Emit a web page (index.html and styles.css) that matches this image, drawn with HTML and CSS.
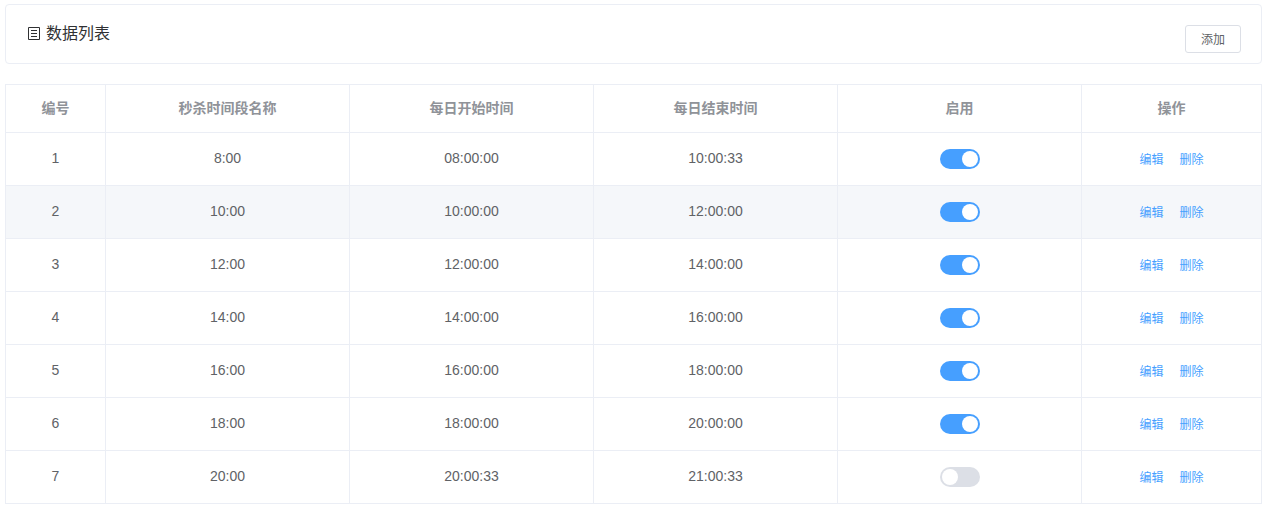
FILE: index.html
```html
<!DOCTYPE html>
<html lang="zh-CN">
<head>
<meta charset="utf-8">
<title>数据列表</title>
<link rel="stylesheet" href="styles.css">
</head>
<body>
<div class="card">
  <div class="title">
    <svg class="title-icon" width="12" height="14" viewBox="0 0 12 14" aria-hidden="true"><path d="M.5.5h11v12H.5zM3 3.5h6M3 6.5h6M3 9.5h6" fill="none" stroke="#303133" stroke-width="1"/></svg>
    <span>数据列表</span>
  </div>
  <button class="btn" type="button">添加</button>
</div>
<table class="table">
  <colgroup><col class="c-id"><col class="c-mid"><col class="c-mid"><col class="c-mid"><col class="c-mid"><col class="c-op"></colgroup>
  <thead>
    <tr><th>编号</th><th>秒杀时间段名称</th><th>每日开始时间</th><th>每日结束时间</th><th>启用</th><th>操作</th></tr>
  </thead>
  <tbody>
    <tr><td>1</td><td>8:00</td><td>08:00:00</td><td>10:00:33</td><td class="cell-switch"><span class="switch on"></span></td><td class="cell-op"><a class="link">编辑</a><a class="link">删除</a></td></tr>
    <tr class="hover"><td>2</td><td>10:00</td><td>10:00:00</td><td>12:00:00</td><td class="cell-switch"><span class="switch on"></span></td><td class="cell-op"><a class="link">编辑</a><a class="link">删除</a></td></tr>
    <tr><td>3</td><td>12:00</td><td>12:00:00</td><td>14:00:00</td><td class="cell-switch"><span class="switch on"></span></td><td class="cell-op"><a class="link">编辑</a><a class="link">删除</a></td></tr>
    <tr><td>4</td><td>14:00</td><td>14:00:00</td><td>16:00:00</td><td class="cell-switch"><span class="switch on"></span></td><td class="cell-op"><a class="link">编辑</a><a class="link">删除</a></td></tr>
    <tr><td>5</td><td>16:00</td><td>16:00:00</td><td>18:00:00</td><td class="cell-switch"><span class="switch on"></span></td><td class="cell-op"><a class="link">编辑</a><a class="link">删除</a></td></tr>
    <tr><td>6</td><td>18:00</td><td>18:00:00</td><td>20:00:00</td><td class="cell-switch"><span class="switch on"></span></td><td class="cell-op"><a class="link">编辑</a><a class="link">删除</a></td></tr>
    <tr><td>7</td><td>20:00</td><td>20:00:33</td><td>21:00:33</td><td class="cell-switch"><span class="switch"></span></td><td class="cell-op"><a class="link">编辑</a><a class="link">删除</a></td></tr>
  </tbody>
</table>
</body>
</html>
```

FILE: styles.css
```css
* { box-sizing: border-box; }
html, body { margin: 0; background: #fff; }
body {
  padding: 4px 14px 0 5px;
  font-family: "Liberation Sans", "Noto Sans CJK SC", sans-serif;
  font-size: 14px;
  color: #606266;
}
.card {
  height: 60px;
  border: 1px solid #ebeef5;
  border-radius: 4px;
  display: flex;
  justify-content: space-between;
  align-items: flex-start;
  padding: 20px 20px 0 22px;
}
.title {
  display: flex;
  align-items: center;
  gap: 6px;
  font-size: 16px;
  line-height: 18px;
  color: #303133;
}
.title-icon { display: block; }
.btn {
  width: 56px;
  height: 28px;
  padding: 0 0 2px;
  border: 1px solid #dcdfe6;
  border-radius: 3px;
  background: #fff;
  color: #606266;
  font: inherit;
  font-size: 12px;
}
.table {
  width: 1257px;
  margin-top: 20px;
  table-layout: fixed;
  border-collapse: separate;
  border-spacing: 0;
  border-top: 1px solid #ebeef5;
  border-left: 1px solid #ebeef5;
}
.c-id { width: 100px; }
.c-mid { width: 244px; }
.c-op { width: 180px; }
th, td {
  text-align: center;
  border-right: 1px solid #ebeef5;
  border-bottom: 1px solid #ebeef5;
}
th { height: 48px; padding: 0 0 4px; color: #909399; font-weight: 700; }
td { height: 53px; padding: 0 0 2px; }
td.cell-switch { padding: 0; }
td.cell-op { padding: 0 0 2px; }
.hover td { background: #f5f7fa; }
.switch {
  display: inline-block;
  position: relative;
  vertical-align: middle;
  width: 40px;
  height: 20px;
  border-radius: 10px;
  background: #dcdfe6;
}
.switch::after {
  content: "";
  position: absolute;
  top: 2px;
  left: 2px;
  width: 16px;
  height: 16px;
  border-radius: 50%;
  background: #fff;
}
.switch.on { background: #469fff; }
.switch.on::after { left: 22px; }
.link { color: #469fff; font-size: 12px; }
.link + .link { margin-left: 16px; }
```
